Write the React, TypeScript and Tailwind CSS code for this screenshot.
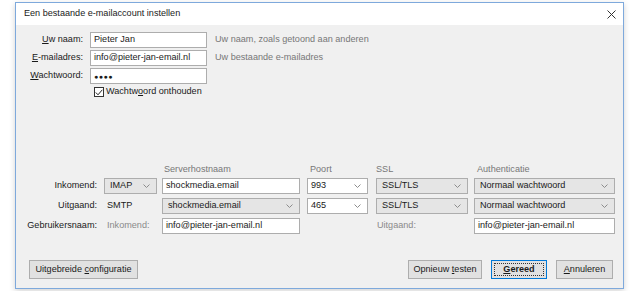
import React from 'react';

const Chevron = () => (
  <svg width="7" height="4" viewBox="0 0 7 4" className="shrink-0">
    <polyline points="0.5,0.5 3.5,3.5 6.5,0.5" fill="none" stroke="#8c8c8c" strokeWidth="1" />
  </svg>
);

function Combo({ value, w }: { value: string; w: string }) {
  return (
    <div className={`${w} h-[16px] bg-[#e5e5e5] border border-[#adadad] flex items-center justify-between pl-[5px] pr-[6px]`}>
      <span>{value}</span>
      <Chevron />
    </div>
  );
}

function EditCombo({ value, w }: { value: string; w: string }) {
  return (
    <div className={`${w} h-[16px] bg-white border border-[#adadad] flex items-center justify-between pl-[3px] pr-[6px]`}>
      <span>{value}</span>
      <Chevron />
    </div>
  );
}

function TextBox({ value, w }: { value: React.ReactNode; w: string }) {
  return <div className={`${w} h-[16px] bg-white border border-[#adadad] flex items-center pl-[3px]`}>{value}</div>;
}

function Btn({ children, w, primary }: { children: React.ReactNode; w: string; primary?: boolean }) {
  return (
    <div
      className={`${w} h-[19px] bg-[#e1e1e1] flex items-center justify-center ${
        primary ? 'border border-[#0078d7] font-bold' : 'border border-[#adadad]'
      }`}
    >
      {primary ? (
        <div className="w-[calc(100%-4px)] h-[calc(100%-4px)] border border-dotted border-[#333] flex items-center justify-center">
          {children}
        </div>
      ) : (
        children
      )}
    </div>
  );
}

const U = ({ c }: { c: string }) => <span className="underline underline-offset-1">{c}</span>;

export default function App() {
  return (
    <div className="w-[641px] h-[291px] bg-white text-[9.1px] leading-none text-[#1a1a1a] font-['Liberation_Sans',Arial,sans-serif]">
      <div className="ml-[15px] mt-[2px] w-[609px] h-[287px] border border-[#7ea9dc] flex flex-col shadow-[0_2px_6px_rgba(0,0,0,0.18)]">
        {/* title bar */}
        <div className="h-[22px] bg-white flex items-center justify-between pl-[8px] pr-[7px]">
          <span>Een bestaande e-mailaccount instellen</span>
          <svg width="9" height="9" viewBox="0 0 9 9">
            <path d="M0.5 0.5 L8.5 8.5 M8.5 0.5 L0.5 8.5" stroke="#333" strokeWidth="1" />
          </svg>
        </div>

        <div className="flex-1 bg-[#f0f0f0] flex flex-col pt-[7px] pb-[9px]">
          {/* account */}
          <div className="flex flex-col gap-[2px]">
            <div className="flex items-center">
              <div className="w-[67px] text-right">
                <U c="U" />w naam:
              </div>
              <div className="ml-[7px]">
                <TextBox w="w-[117px]" value="Pieter Jan" />
              </div>
              <span className="ml-[8px] text-[#777]">Uw naam, zoals getoond aan anderen</span>
            </div>
            <div className="flex items-center">
              <div className="w-[67px] text-right">
                <U c="E" />-mailadres:
              </div>
              <div className="ml-[7px]">
                <TextBox w="w-[117px]" value="info@pieter-jan-email.nl" />
              </div>
              <span className="ml-[8px] text-[#777]">Uw bestaande e-mailadres</span>
            </div>
            <div className="flex items-center">
              <div className="w-[67px] text-right">
                <U c="W" />achtwoord:
              </div>
              <div className="ml-[7px]">
                <TextBox w="w-[117px]" value={<span className="text-[7px] tracking-[0.5px]">●●●●</span>} />
              </div>
            </div>
            <div className="flex items-center h-[10px] mt-[1px] ml-[78px]">
              <div className="w-[10px] h-[10px] bg-white border border-[#333] flex items-center justify-center">
                <svg width="8" height="7" viewBox="0 0 8 7">
                  <polyline points="0.8,3.5 3,5.8 7.3,0.8" fill="none" stroke="#222" strokeWidth="1" />
                </svg>
              </div>
              <span className="ml-[2px]">
                Wachtw<U c="o" />ord onthouden
              </span>
            </div>
          </div>

          <div className="flex-1" />

          {/* servers */}
          <div className="grid grid-cols-[82px_52px_139px_63px_92px_141px] gap-x-[6px] gap-y-[4px] grid-rows-[8px_16px_16px_16px] items-center">
            <div />
            <div />
            <div className="pl-[2px] text-[#777]">Serverhostnaam</div>
            <div className="pl-[3px] text-[#777]">Poort</div>
            <div className="text-[#777]">SSL</div>
            <div className="pl-[3px] text-[#777]">Authenticatie</div>

            <div className="text-right pr-[1px]">Inkomend:</div>
            <Combo w="w-[53px]" value="IMAP" />
            <TextBox w="w-[138px]" value="shockmedia.email" />
            <EditCombo w="w-[61px]" value="993" />
            <Combo w="w-[92px]" value="SSL/TLS" />
            <Combo w="w-[141px]" value="Normaal wachtwoord" />

            <div className="text-right pr-[1px]">Uitgaand:</div>
            <div className="pl-[3px]">SMTP</div>
            <Combo w="w-[138px]" value="shockmedia.email" />
            <EditCombo w="w-[61px]" value="465" />
            <Combo w="w-[92px]" value="SSL/TLS" />
            <Combo w="w-[141px]" value="Normaal wachtwoord" />

            <div className="text-right pr-[1px]">Gebruikersnaam:</div>
            <div className="pl-[3px] text-[#8a8a8a]">Inkomend:</div>
            <TextBox w="w-[138px]" value="info@pieter-jan-email.nl" />
            <div />
            <div className="pl-[1px] text-[#8a8a8a]">Uitgaand:</div>
            <TextBox w="w-[141px]" value="info@pieter-jan-email.nl" />
          </div>

          {/* buttons */}
          <div className="mt-[26px] flex items-center justify-between pl-[13px] pr-[10px]">
            <Btn w="w-[109px]">
              <span>
                Uitgebreide <U c="c" />onfiguratie
              </span>
            </Btn>
            <div className="flex items-center gap-[9px]">
              <Btn w="w-[74px]">
                <span>
                  Opnieuw <U c="t" />esten
                </span>
              </Btn>
              <Btn w="w-[56px]" primary>
                <span>
                  <U c="G" />ereed
                </span>
              </Btn>
              <Btn w="w-[57px]">
                <span>
                  <U c="A" />nnuleren
                </span>
              </Btn>
            </div>
          </div>
        </div>
      </div>
    </div>
  );
}
